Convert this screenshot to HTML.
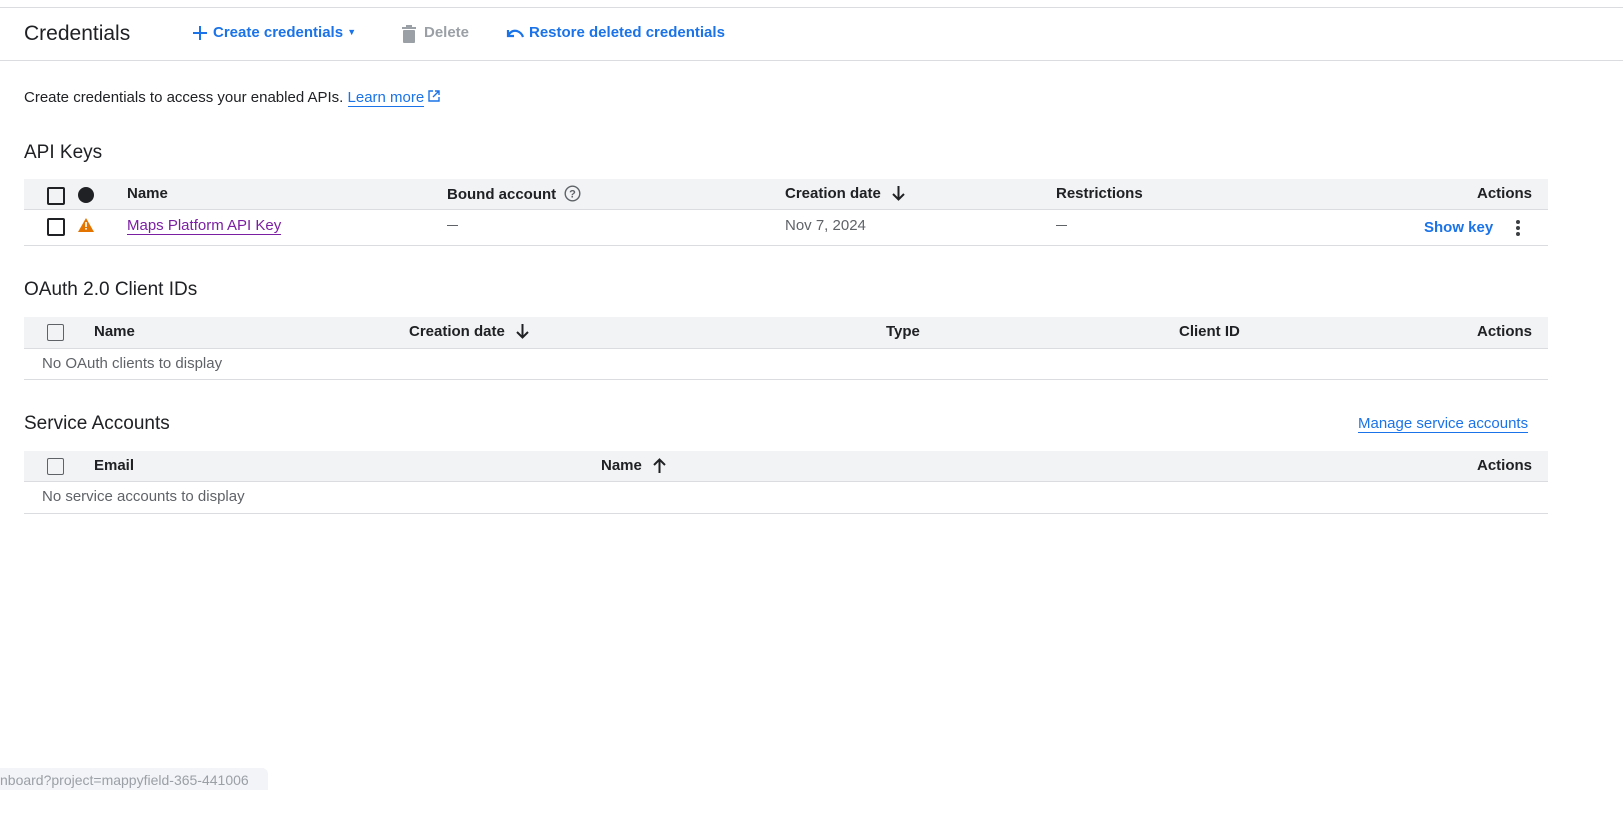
<!DOCTYPE html>
<html><head><style>
body{margin:0;width:1623px;height:818px;background:#fff;font-family:"Liberation Sans",sans-serif;color:#202124;position:relative;overflow:hidden}
.a{position:absolute;white-space:nowrap}
.hl{position:absolute;left:0;width:1623px;height:1px;background:#dadce0}
.bar{position:absolute;left:24px;width:1524px;background:#f1f3f4;border-bottom:1px solid #dadce0}
.line{position:absolute;left:24px;width:1524px;height:1px;background:#dadce0}
.cb{position:absolute;width:14px;height:14px;border:2px solid #202124;border-radius:2px}
.cbg{position:absolute;width:15px;height:15px;border:1.5px solid #5f6368;border-radius:2px}
.h{font-size:15px;font-weight:bold;color:#202124}
.t{font-size:15px}
.blue{color:#1a73e8}
.dash{position:absolute;width:11px;height:1px;background:#5f6368}
</style></head><body>
<div class="hl" style="top:7px"></div>
<div class="hl" style="top:60px"></div>
<div class="a" style="left:24px;top:22px;font-size:21px">Credentials</div>
<svg class="a" style="left:193px;top:26px" width="14" height="14" viewBox="0 0 14 14"><path d="M7 0v14M0 7h14" stroke="#1a73e8" stroke-width="2"/></svg>
<div class="a blue" style="left:213px;top:24px;font-size:15px;font-weight:bold">Create credentials <span style="font-size:9px;position:relative;top:-2px">▼</span></div>
<svg class="a" style="left:401px;top:25px" width="16" height="18" viewBox="0 0 16 18"><rect x="1" y="2" width="14" height="2" fill="#9aa0a6"/><rect x="5" y="0" width="6" height="2" fill="#9aa0a6"/><rect x="2" y="5" width="12" height="13" rx="1" fill="#9aa0a6"/></svg>
<div class="a" style="left:424px;top:24px;font-size:15px;color:#9aa0a6;font-weight:bold">Delete</div>
<svg class="a" style="left:506px;top:27px" width="18" height="14" viewBox="0 0 18 14"><path d="M2 3v6h6M2 9c2-4 5-6 9-5 3 1 5 3 6 6" fill="none" stroke="#1a73e8" stroke-width="2.2"/></svg>
<div class="a blue" style="left:529px;top:24px;font-size:15px;font-weight:bold">Restore deleted credentials</div>

<div class="a t" style="left:24px;top:89px;font-size:15px">Create credentials to access your enabled APIs. <span class="blue" style="border-bottom:1px solid #1a73e8">Learn more</span> <svg width="12" height="12" viewBox="0 0 12 12"><path d="M5 1H1v10h10V7M7 1h4v4M11 1 5 7" fill="none" stroke="#1a73e8" stroke-width="1.4"/></svg></div>

<div class="a" style="left:24px;top:142px;font-size:19px">API Keys</div>
<div class="bar" style="top:179px;height:30px"></div>
<div class="cb" style="left:47px;top:187px"></div>
<div class="a" style="left:78px;top:187px;width:16px;height:16px;border-radius:50%;background:#202124"></div>
<div class="a h" style="left:127px;top:185px">Name</div>
<div class="a h" style="left:447px;top:185px">Bound account <svg style="vertical-align:-3px;margin-left:4px" width="17" height="17" viewBox="0 0 17 17"><circle cx="8.5" cy="8.5" r="7.3" fill="none" stroke="#5f6368" stroke-width="1.4"/><text x="8.5" y="12.5" font-size="11" text-anchor="middle" fill="#5f6368" font-family="Liberation Sans">?</text></svg></div>
<div class="a h" style="left:785px;top:185px">Creation date</div>
<svg class="a" style="left:892px;top:186px" width="13" height="15" viewBox="0 0 13 15"><path d="M6.5 0v13M1 8l5.5 5.5L12 8" fill="none" stroke="#202124" stroke-width="2"/></svg>
<div class="a h" style="left:1056px;top:185px">Restrictions</div>
<div class="a h" style="left:1477px;top:185px">Actions</div>
<div class="cb" style="left:47px;top:218px"></div>
<svg class="a" style="left:78px;top:218px" width="16" height="14" viewBox="0 0 16 14"><path d="M8 0 16 14H0z" fill="#e37400"/><rect x="7.2" y="4" width="1.6" height="5" fill="#fff"/><rect x="7.2" y="10" width="1.6" height="1.6" fill="#fff"/></svg>
<div class="a t" style="left:127px;top:217px;color:#7b1fa2;border-bottom:1px solid #7b1fa2">Maps Platform API Key</div>
<div class="dash" style="left:447px;top:225px"></div>
<div class="a t" style="left:785px;top:217px;color:#5f6368">Nov 7, 2024</div>
<div class="dash" style="left:1056px;top:225px"></div>
<div class="a blue" style="left:1424px;top:219px;font-size:15px;font-weight:bold">Show key</div>
<svg class="a" style="left:1514px;top:219px" width="8" height="18" viewBox="0 0 8 18"><circle cx="4" cy="3" r="2" fill="#3c4043"/><circle cx="4" cy="9" r="2" fill="#3c4043"/><circle cx="4" cy="15" r="2" fill="#3c4043"/></svg>
<div class="line" style="top:245px"></div>

<div class="a" style="left:24px;top:279px;font-size:19px">OAuth 2.0 Client IDs</div>
<div class="bar" style="top:317px;height:31px"></div>
<div class="cbg" style="left:47px;top:324px"></div>
<div class="a h" style="left:94px;top:323px">Name</div>
<div class="a h" style="left:409px;top:323px">Creation date</div>
<svg class="a" style="left:516px;top:324px" width="13" height="15" viewBox="0 0 13 15"><path d="M6.5 0v13M1 8l5.5 5.5L12 8" fill="none" stroke="#202124" stroke-width="2"/></svg>
<div class="a h" style="left:886px;top:323px">Type</div>
<div class="a h" style="left:1179px;top:323px">Client ID</div>
<div class="a h" style="left:1477px;top:323px">Actions</div>
<div class="a t" style="left:42px;top:355px;color:#5f6368">No OAuth clients to display</div>
<div class="line" style="top:379px"></div>

<div class="a" style="left:24px;top:413px;font-size:19px">Service Accounts</div>
<div class="a blue" style="left:1358px;top:415px;font-size:15px;border-bottom:1px solid #1a73e8">Manage service accounts</div>
<div class="bar" style="top:451px;height:30px"></div>
<div class="cbg" style="left:47px;top:458px"></div>
<div class="a h" style="left:94px;top:457px">Email</div>
<div class="a h" style="left:601px;top:457px">Name</div>
<svg class="a" style="left:653px;top:458px" width="13" height="15" viewBox="0 0 13 15"><path d="M6.5 15V2M1 7l5.5-5.5L12 7" fill="none" stroke="#202124" stroke-width="2"/></svg>
<div class="a h" style="left:1477px;top:457px">Actions</div>
<div class="a t" style="left:42px;top:488px;color:#5f6368">No service accounts to display</div>
<div class="line" style="top:513px"></div>

<div class="a" style="left:0;top:768px;width:268px;height:22px;background:#f3f4f8;border-radius:0 6px 0 0;color:#9aa0a6;font-size:14px;line-height:24px;overflow:hidden">nboard?project=mappyfield-365-441006</div>
</body></html>
